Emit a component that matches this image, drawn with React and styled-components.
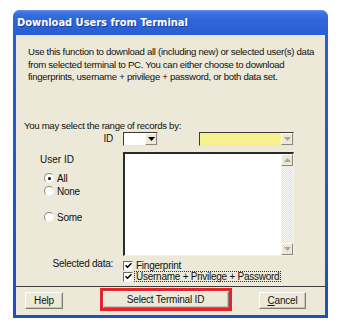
import React from 'react'
import styled, { createGlobalStyle, css } from 'styled-components'

const GlobalStyle = createGlobalStyle`
  html, body {
    margin: 0;
    background: #fff;
  }
  body {
    font-family: "Liberation Sans", Arial, sans-serif;
    font-size: 10px;
    color: #111;
  }
`

const Window = styled.div`
  margin: 10px 0 0 13px;
  width: 315px;
  height: 308px;
  display: flex;
  flex-direction: column;
  background: linear-gradient(#2b5fd6, #1f4fc4);
  border-radius: 7px 7px 0 0;
`

const TitleBar = styled.div`
  height: 25px;
  display: flex;
  align-items: center;
  padding-left: 4px;
  border-radius: 7px 7px 0 0;
  background: linear-gradient(#5c91ee 0, #3a72e0 3px, #2f65d8 40%, #2a5fd3 100%);
  color: #fff;
  font-family: "DejaVu Sans Condensed", "DejaVu Sans", sans-serif;
  font-weight: bold;
  font-size: 11px;
  text-shadow: 1px 1px 0 #1b3f9a;
`

const Client = styled.div`
  flex: 1;
  margin: 0 3px 3px;
  background: #ece9d8;
  display: flex;
  flex-direction: column;
`

const Body = styled.div`
  flex: 1;
  padding: 11px 0 0 12px;
`

const Description = styled.p`
  margin: 0;
  white-space: nowrap;
  line-height: 12.5px;
  font-size: 9.6px;
  letter-spacing: -0.3px;
`

const RangeLabel = styled.div`
  margin: 36px 0 0 -4px;
  letter-spacing: -0.3px;
  font-size: 9.6px;
  line-height: 12px;
`

const Grid = styled.div`
  margin-left: -12px;
  display: grid;
  grid-template-columns: 107px 171px;
  row-gap: 6px;
`

const SideLabel = styled.div`
  text-align: right;
  padding-right: 10px;
  letter-spacing: -0.25px;
  line-height: 12px;
  margin-top: ${p => p.$top || 0}px;
`

const ComboRow = styled.div`
  display: flex;
  justify-content: space-between;
  height: 14px;
`

const Combo = styled.div`
  width: ${p => p.$width}px;
  box-sizing: border-box;
  display: flex;
  justify-content: flex-end;
  background: ${p => p.$yellow ? '#f6f08e' : '#fff'};
  border-top: 1px solid #3a3a3a;
  border-left: 1px solid #3a3a3a;
  border-right: 1px solid #e6e3d4;
  border-bottom: 1px solid #e6e3d4;
`

const ArrowButton = styled.div`
  width: 12px;
  box-sizing: border-box;
  display: flex;
  align-items: center;
  justify-content: center;
  background: #ece9d8;
  border-top: 1px solid #fff;
  border-left: 1px solid #fff;
  border-right: 1px solid #8a877c;
  border-bottom: 1px solid #8a877c;
  ${p => p.$tall && css`height: 12px;`}
`

const SideColumn = styled.div`
  padding: 2px 0 0 24px;
  display: flex;
  flex-direction: column;
`

const RadioRow = styled.label`
  display: flex;
  align-items: center;
  gap: 3px;
  margin-left: 4px;
  height: 13px;
  margin-top: ${p => p.$gap}px;
  letter-spacing: -0.25px;
`

const RadioMark = styled.span`
  width: 10px;
  height: 10px;
  box-sizing: border-box;
  border-radius: 50%;
  background: #fff;
  border: 1px solid;
  border-color: #8c8a80 #f4f2ea #f4f2ea #8c8a80;
  display: flex;
  align-items: center;
  justify-content: center;
  &::after {
    content: '';
    width: 3px;
    height: 3px;
    border-radius: 50%;
    background: ${p => p.$checked ? '#000' : 'transparent'};
  }
`

const ListBox = styled.div`
  height: 104px;
  box-sizing: border-box;
  background: #fff;
  border-top: 2px solid #2a2a2a;
  border-left: 2px solid #2a2a2a;
  border-right: 1px solid #f4f2ea;
  border-bottom: 1px solid #f4f2ea;
  display: flex;
  justify-content: flex-end;
`

const ScrollBar = styled.div`
  width: 12px;
  display: flex;
  flex-direction: column;
  justify-content: space-between;
  background: repeating-conic-gradient(#fbfaf6 0 25%, #e2dfd0 0 50%) 0 0 / 2px 2px;
`

const ChecksColumn = styled.div`
  display: flex;
  flex-direction: column;
  gap: 1px;
  margin-top: -1px;
`

const CheckRow = styled.label`
  display: flex;
  align-items: center;
  gap: 2px;
  height: 10px;
  letter-spacing: -0.25px;
`

const CheckBox = styled.span`
  width: 10px;
  height: 10px;
  box-sizing: border-box;
  background: #fff;
  border: 1px solid;
  border-color: #6e6c64 #f4f2ea #f4f2ea #6e6c64;
  display: flex;
  align-items: center;
  justify-content: center;
`

const CheckText = styled.span`
  line-height: 9px;
  padding: 0 1px;
  ${p => p.$focus && css`outline: 1px dotted #333;`}
`

const Footer = styled.div`
  height: 29px;
  border-top: 1px solid #3c3c3c;
  box-sizing: border-box;
  display: grid;
  grid-template-columns: 1fr auto 1fr;
  align-items: start;
  padding: 5px 19px 0 9px;
`

const Button = styled.button`
  height: 17px;
  width: ${p => p.$width}px;
  padding: 0;
  font-family: "Liberation Sans", Arial, sans-serif;
  font-size: 10px;
  letter-spacing: -0.2px;
  color: #111;
  background: #ece9d8;
  border: 1px solid;
  border-color: #fff #7f7d72 #7f7d72 #fff;
  box-shadow: inset -1px -1px 0 #c7c4b4;
  justify-self: ${p => p.$align || 'center'};
  ${p => p.$highlight && css`
    outline: 3px solid #e3242b;
    outline-offset: 0;
    margin-top: -1px;
  `}
`

const DownArrow = ({ color = '#000' }) => (
  <svg width="7" height="4" viewBox="0 0 7 4">
    <path d="M0 0h7L3.5 4z" fill={color} />
  </svg>
)

const UpArrow = ({ color = '#000' }) => (
  <svg width="7" height="4" viewBox="0 0 7 4">
    <path d="M0 4h7L3.5 0z" fill={color} />
  </svg>
)

const Tick = () => (
  <svg width="7" height="7" viewBox="0 0 7 7">
    <path d="M0.5 3.2l2 2 4-4" stroke="#000" strokeWidth="1.6" fill="none" />
  </svg>
)

const radios = [
  { label: 'All', checked: true, gap: 7 },
  { label: 'None', checked: false, gap: 0 },
  { label: 'Some', checked: false, gap: 13 }
]

export default function App() {
  return (
    <>
      <GlobalStyle />
      <Window>
        <TitleBar>Download Users from Terminal</TitleBar>
        <Client>
          <Body>
            <Description>
              Use this function to download all (including new) or selected user(s) data
              <br />
              from selected terminal to PC. You can either choose to download
              <br />
              fingerprints, username + privilege + password, or both data set.
            </Description>
            <RangeLabel>You may select the range of records by:</RangeLabel>
            <Grid>
              <SideLabel $top={1}>ID</SideLabel>
              <ComboRow>
                <Combo $width={35}>
                  <ArrowButton>
                    <DownArrow />
                  </ArrowButton>
                </Combo>
                <Combo $width={95} $yellow>
                  <ArrowButton>
                    <DownArrow color="#a9a79c" />
                  </ArrowButton>
                </Combo>
              </ComboRow>
              <SideColumn>
                <div>User ID</div>
                {radios.map(r => (
                  <RadioRow key={r.label} $gap={r.gap}>
                    <RadioMark $checked={r.checked} />
                    {r.label}
                  </RadioRow>
                ))}
              </SideColumn>
              <ListBox>
                <ScrollBar>
                  <ArrowButton $tall>
                    <UpArrow color="#a9a79c" />
                  </ArrowButton>
                  <ArrowButton $tall>
                    <DownArrow color="#a9a79c" />
                  </ArrowButton>
                </ScrollBar>
              </ListBox>
              <SideLabel $top={-4}>Selected data:</SideLabel>
              <ChecksColumn>
                <CheckRow>
                  <CheckBox>
                    <Tick />
                  </CheckBox>
                  <CheckText>Fingerprint</CheckText>
                </CheckRow>
                <CheckRow>
                  <CheckBox>
                    <Tick />
                  </CheckBox>
                  <CheckText $focus>Username + Privilege + Password</CheckText>
                </CheckRow>
              </ChecksColumn>
            </Grid>
          </Body>
          <Footer>
            <Button $width={38} $align="start">Help</Button>
            <Button $width={126} $highlight>Select Terminal ID</Button>
            <Button $width={47} $align="end">
              <u>C</u>ancel
            </Button>
          </Footer>
        </Client>
      </Window>
    </>
  )
}
